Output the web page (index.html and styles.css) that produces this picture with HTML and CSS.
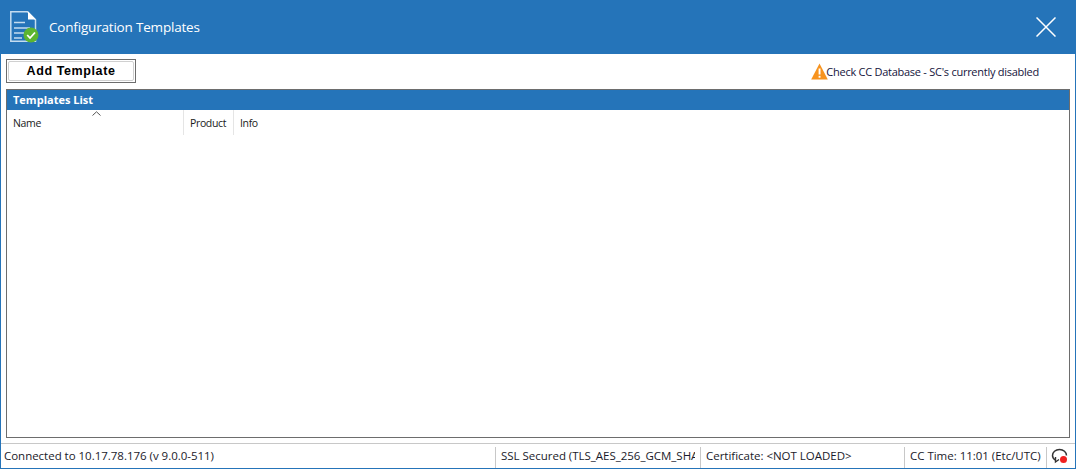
FILE: index.html
```html
<!DOCTYPE html>
<html lang="en">
<head>
<meta charset="utf-8">
<title>Configuration Templates</title>
<link rel="stylesheet" href="styles.css">
</head>
<body>
<div class="window">
  <header class="titlebar">
    <svg class="doc-icon" width="29" height="32" viewBox="0 0 29 32">
      <path d="M0.8 0.8H17.5L25.5 8.8V30.2H0.8Z" fill="none" stroke="#c4dcf0" stroke-width="1.5"/>
      <path d="M18 0.5L26 8.5H18Z" fill="#ffffff"/>
      <path d="M4 11.5H15M4 17H20M4 22H14M4 27H12" stroke="#c4dcf0" stroke-width="1.3" fill="none"/>
      <circle cx="21" cy="24" r="7.5" fill="#5cb531"/>
      <path d="M17.2 24L20 27L25 21.5" stroke="#ffffff" stroke-width="1.8" fill="none"/>
    </svg>
    <h1 class="title">Configuration Templates</h1>
    <svg class="close" width="20" height="20" viewBox="0 0 20 20">
      <path d="M0.5 0.5L19.5 19.5M19.5 0.5L0.5 19.5" stroke="#ffffff" stroke-width="1.5" fill="none"/>
    </svg>
  </header>
  <div class="toolbar">
    <button class="add-btn" type="button"><span class="add-inner">Add Template</span></button>
    <div class="warning">
      <svg width="17" height="17" viewBox="0 0 17 17">
        <path d="M8.5 0.5L16.8 16.5H0.2Z" fill="#f7931e"/>
        <rect x="7.6" y="5.5" width="1.9" height="6" fill="#ffffff"/>
        <rect x="7.6" y="12.8" width="1.9" height="1.9" fill="#ffffff"/>
      </svg>
      <span class="warning-text">Check CC Database - SC's currently disabled</span>
    </div>
  </div>
  <section class="panel">
    <div class="panel-title">Templates List</div>
    <div class="columns">
      <div class="col col-name">Name<svg class="sort" width="9" height="5" viewBox="0 0 9 5"><path d="M0.5 4.5L4.5 0.8L8.5 4.5" fill="none" stroke="#555555"/></svg></div>
      <div class="col col-product">Product</div>
      <div class="col col-info">Info</div>
    </div>
    <div class="list-body"></div>
  </section>
  <footer class="statusbar">
    <div class="cell cell-conn">Connected to 10.17.78.176 (v 9.0.0-511)</div>
    <div class="cell cell-ssl"><span class="clip">SSL Secured (TLS_AES_256_GCM_SHA</span></div>
    <div class="cell cell-cert">Certificate: &lt;NOT LOADED&gt;</div>
    <div class="cell cell-time">CC Time: 11:01 (Etc/UTC)</div>
    <div class="cell cell-icon">
      <svg width="17" height="17" viewBox="0 0 17 17">
        <path d="M4.5 12C2.6 11 1.5 9.4 1.5 7.5C1.5 4.2 4.5 1.5 8.5 1.5C12.5 1.5 15.5 4.2 15.5 7.5" fill="none" stroke="#333333" stroke-width="1.5"/>
        <path d="M4.5 9V14L8 11.5" fill="none" stroke="#333333" stroke-width="1.4"/>
        <circle cx="12.5" cy="11.5" r="3.5" fill="#f02020"/>
      </svg>
    </div>
  </footer>
</div>
</body>
</html>
```
FILE: styles.css
```css
* { box-sizing: border-box; }
html, body { margin: 0; padding: 0; background: #ffffff; }
.window {
  width: 1076px;
  height: 469px;
  display: flex;
  flex-direction: column;
  border: 1px solid #2574b9;
  border-top: 0;
  font-family: "Open Sans", "Noto Sans", sans-serif;
  color: #1a1a1a;
  overflow: hidden;
}
.titlebar {
  flex: 0 0 54px;
  margin: 0 -1px;
  background: #2574b9;
  display: flex;
  align-items: center;
  padding: 0 20px 0 10px;
}
.doc-icon { flex: none; }
.title {
  margin: 0 0 0 10px;
  font-size: 13.5px;
  font-weight: 400;
  color: #ffffff;
  flex: 1;
  letter-spacing: -0.19px;
}
.toolbar {
  flex: 0 0 35px;
  display: flex;
  justify-content: space-between;
  align-items: flex-start;
  padding: 5px 36px 0 5px;
}
.add-btn {
  width: 130px;
  height: 24px;
  padding: 1px;
  border: 1px solid #6d6d6d;
  background: #ffffff;
  font: inherit;
  cursor: pointer;
}
.add-inner {
  display: block;
  height: 100%;
  border: 1px solid #d0d0d0;
  border-radius: 2px;
  font-family: "Liberation Sans", sans-serif;
  font-weight: 700;
  font-size: 12.5px;
  letter-spacing: 0.6px;
  line-height: 18px;
  color: #000000;
}
.warning {
  display: flex;
  align-items: center;
  margin-top: 4px;
  height: 17px;
}
.warning-text {
  margin-left: -2px;
  font-size: 11px;
  letter-spacing: -0.26px;
  color: #14143c;
}
.panel {
  flex: 0 0 349px;
  margin: 0 5px;
  border: 1px solid #6d6d6d;
  display: flex;
  flex-direction: column;
}
.panel-title {
  flex: 0 0 20px;
  background: #2574b9;
  color: #ffffff;
  font-weight: 700;
  font-size: 11px;
  line-height: 20px;
  padding-left: 6px;
}
.columns {
  flex: 0 0 25px;
  display: flex;
  font-size: 10.5px;
  letter-spacing: -0.35px;
  color: #1a1a1a;
}
.col {
  position: relative;
  padding: 5px 0 0 6px;
  line-height: 17px;
  border-right: 1px solid #e5e5e5;
}
.col-name { width: 177px; }
.col-product { width: 50px; }
.col-info { flex: 1; border-right: 0; }
.sort { position: absolute; left: 85px; top: 1px; }
.list-body { flex: 1; }
.statusbar {
  flex: 1;
  margin-top: 5px;
  border-top: 1px solid #c8c8c8;
  display: flex;
  align-items: stretch;
  font-size: 11.5px;
  letter-spacing: -0.02px;
  color: #1a1a2a;
}
.cell {
  padding-left: 5px;
  margin: 3px 0 2px;
  line-height: 18px;
  white-space: nowrap;
  overflow: hidden;
  border-left: 1px solid #c8c8c8;
}
.clip { display: block; width: 194px; overflow: hidden; }
.cell-conn { flex: 0 0 494px; border-left: 0; padding-left: 3px; }
.cell-ssl { flex: 0 0 205px; }
.cell-cert { flex: 0 0 204px; }
.cell-time { flex: 0 0 142px; }
.cell-icon { flex: 1; padding: 1px 0 0 4px; }
```
